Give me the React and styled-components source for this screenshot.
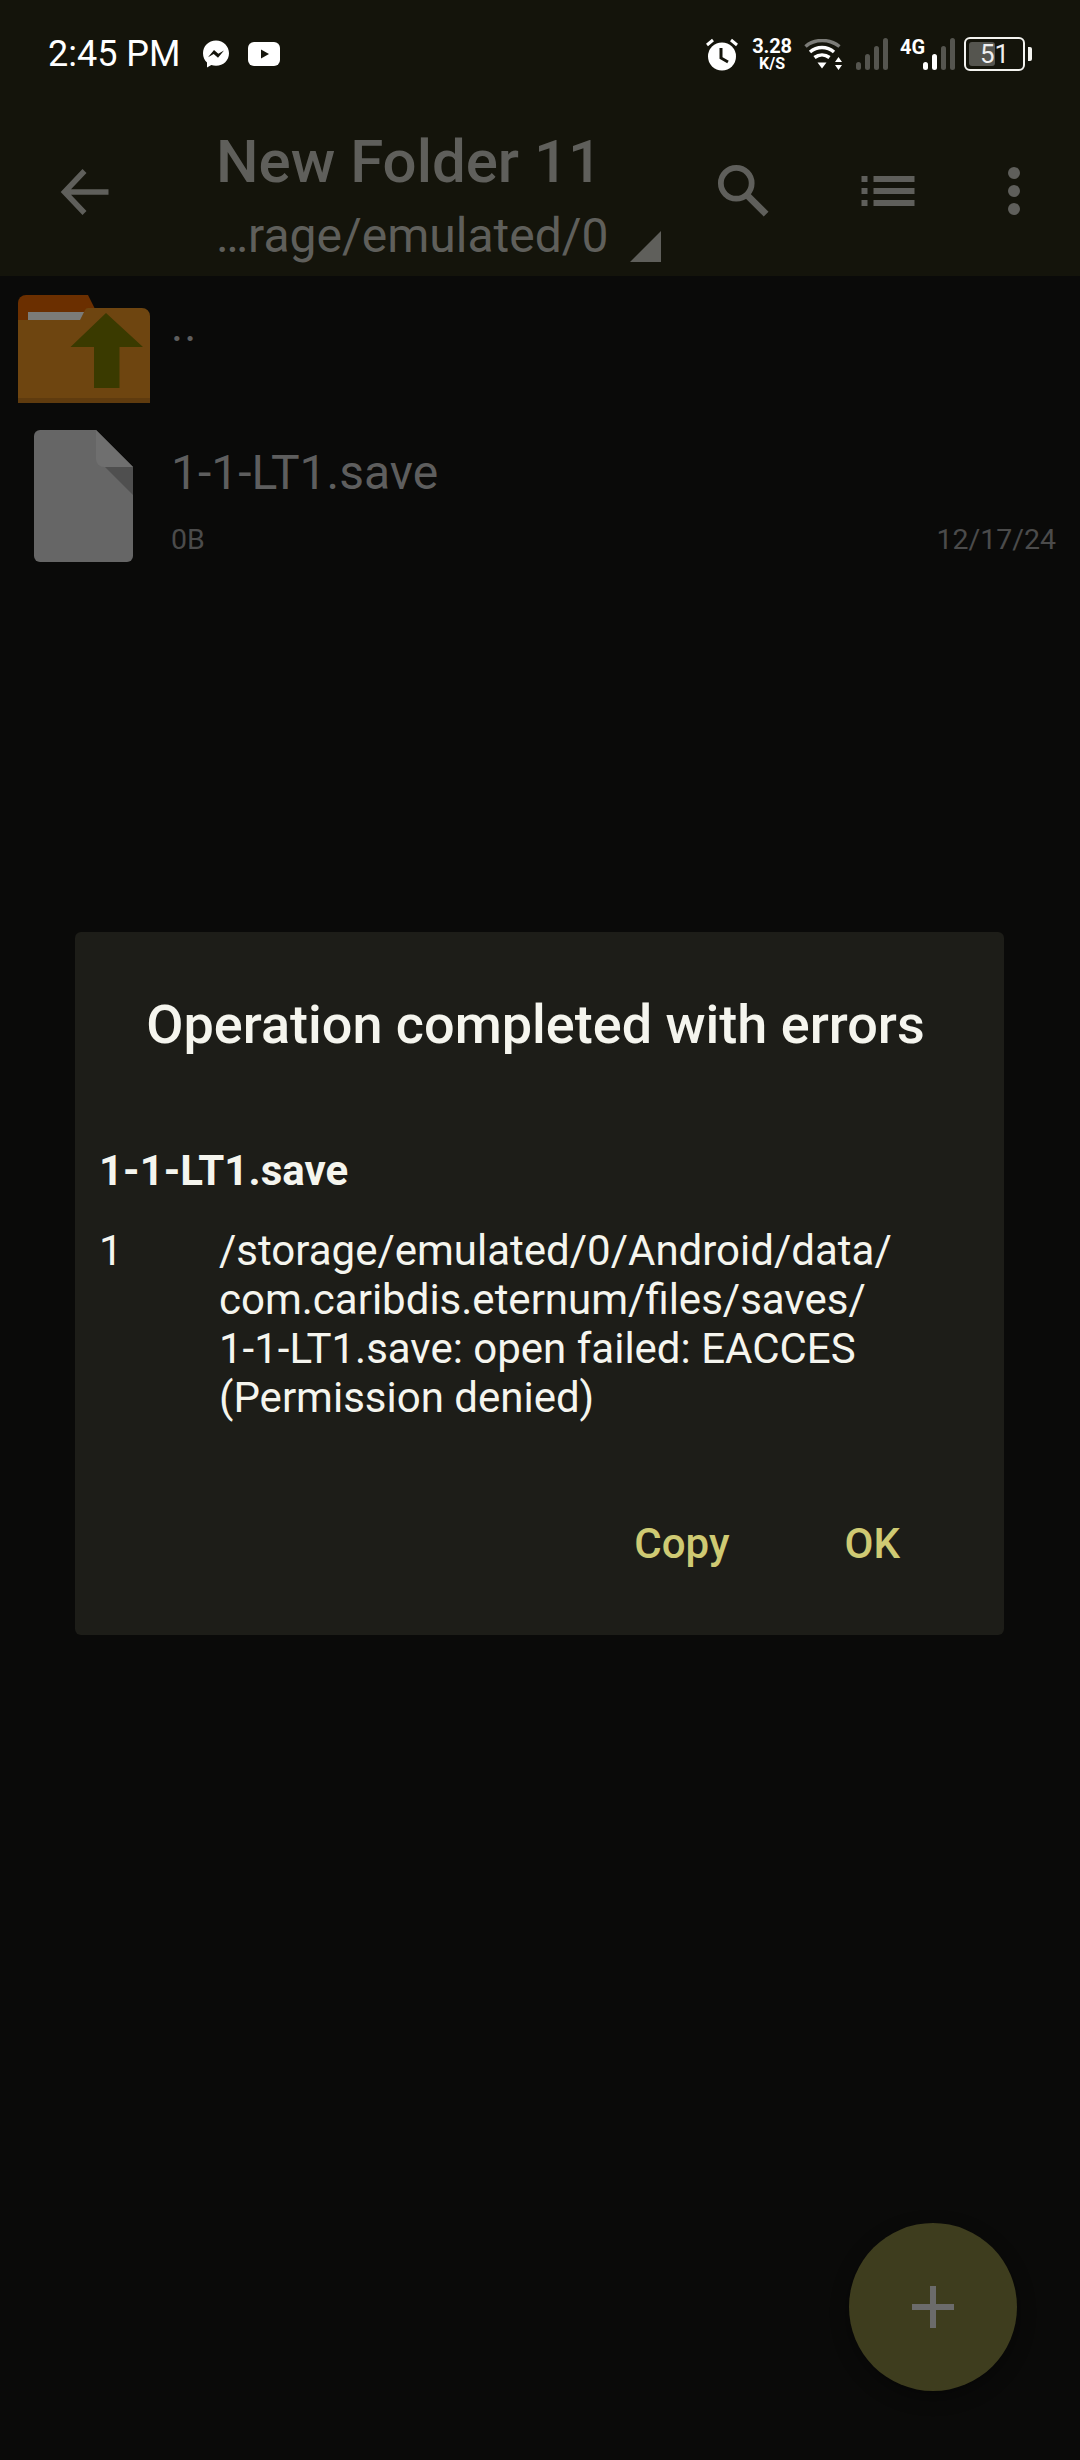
import React from "react";
import styled, { createGlobalStyle } from "styled-components";

const Global = createGlobalStyle`
  html, body { margin: 0; padding: 0; background: #0a0a09; }
  * { box-sizing: border-box; }
`;

const Page = styled.div`
  position: relative;
  width: 1080px;
  height: 2460px;
  overflow: hidden;
  background: #0a0a09;
  font-family: Roboto, "Liberation Sans", sans-serif;
`;
const Header = styled.header`
  height: 276px;
  background: #14140b;
  display: flex;
  flex-direction: column;
`;
const StatusBar = styled.div`
  height: 108px;
  padding: 0 55px 0 48px;
  display: flex;
  align-items: center;
  color: #fff;
`;
const Time = styled.span`
  font-size: 36px;
  line-height: 44px;
  width: 154px;
`;
const StatusRight = styled.div`
  margin-left: auto;
  display: flex;
  align-items: center;
`;
const Speed = styled.div`
  width: 40px;
  margin: -2px 12px 0 14px;
  display: flex;
  flex-direction: column;
  align-items: center;
  font-weight: 700;
  line-height: 1;
`;
const SpeedValue = styled.span`
  font-size: 20px;
  height: 20px;
  letter-spacing: -0.2px;
`;
const SpeedUnit = styled.span`
  font-size: 16px;
  height: 15px;
`;
const NetLabel = styled.span`
  font-size: 20px;
  font-weight: 700;
  line-height: 18px;
  width: 24px;
  margin: -14px -1px 0 12px;
`;
const SignalGap = styled.span`
  width: 13px;
`;
const Battery = styled.div`
  position: relative;
  width: 61px;
  height: 34px;
  margin-left: 9px;
  border: 2.5px solid #f4f4f0;
  border-radius: 6px;
  display: flex;
  align-items: center;
  justify-content: center;
  font-size: 26px;
  color: #eee;
  &::before {
    content: "";
    position: absolute;
    left: 3px;
    top: 3px;
    bottom: 3px;
    width: 26px;
    background: #55554f;
    border-radius: 3px;
  }
  &::after {
    content: "";
    position: absolute;
    right: -9px;
    top: 8px;
    width: 4px;
    height: 14px;
    background: #f4f4f0;
    border-radius: 0 2px 2px 0;
  }
`;
const BatteryText = styled.span`
  position: relative;
  line-height: 1;
`;
const Toolbar = styled.div`
  flex: 1;
  display: flex;
  align-items: flex-start;
  color: #5f5f5b;
`;
const BackSlot = styled.div`
  width: 216px;
  padding: 60px 0 0 60px;
`;
const Titles = styled.div`
  width: 440px;
  padding-top: 25px;
`;
const Title = styled.div`
  font-size: 60px;
  font-weight: 500;
  line-height: 58px;
  white-space: nowrap;
`;
const SubRow = styled.div`
  display: flex;
  align-items: flex-start;
  margin-top: 17px;
`;
const Sub = styled.div`
  font-size: 48px;
  line-height: 56px;
  white-space: nowrap;
`;
const Triangle = styled.svg`
  margin: 23px 0 0 21px;
  flex: none;
`;
const Actions = styled.div`
  display: flex;
  align-items: center;
  height: 68px;
  margin: 49px 0 0 61px;
`;
const SearchGlyph = styled.svg`
  margin-right: 92px;
`;
const ListGlyph = styled.svg`
  margin-right: 93px;
`;
const List = styled.div`
  display: flex;
  flex-direction: column;
`;
const Row = styled.div`
  display: flex;
  height: ${(p) => p.$h}px;
  padding-top: ${(p) => p.$top}px;
`;
const IconSlot = styled.div`
  width: 171px;
  flex: none;
  padding-left: ${(p) => p.$left}px;
`;
const RowText = styled.div`
  flex: 1;
  color: #5e5e5e;
  padding-right: 24px;
`;
const Dots = styled.div`
  font-size: 46px;
  line-height: 46px;
  margin-top: 7px;
  letter-spacing: 1px;
`;
const FileName = styled.div`
  font-size: 48px;
  line-height: 54px;
  margin-top: 16px;
`;
const Meta = styled.div`
  display: flex;
  justify-content: space-between;
  font-size: 28.5px;
  line-height: 34px;
  margin-top: 23px;
  color: #4b4b4b;
`;
const Dialog = styled.section`
  position: absolute;
  left: 75px;
  top: 932px;
  width: 929px;
  height: 703px;
  background: #1d1d18;
  border-radius: 6px;
  padding: 61px 25px 0 24px;
  color: #f5f5ee;
  display: flex;
  flex-direction: column;
`;
const DialogTitle = styled.h2`
  margin: 0;
  padding-right: 7px;
  font-size: 54px;
  font-weight: 500;
  line-height: 64px;
  text-align: center;
`;
const ErrorFile = styled.div`
  font-size: 42px;
  font-weight: 700;
  line-height: 48px;
  margin-top: 90px;
`;
const ErrorRow = styled.div`
  display: grid;
  grid-template-columns: 120px 1fr;
  font-size: 42px;
  line-height: 49px;
  margin-top: 31px;
`;
const Buttons = styled.div`
  display: flex;
  justify-content: flex-end;
  gap: 115px;
  margin-top: 98px;
  padding-right: 79px;
`;
const DialogButton = styled.button`
  all: unset;
  font-family: inherit;
  font-size: 42px;
  font-weight: 500;
  line-height: 48px;
  color: #cfca73;
`;
const Fab = styled.button`
  all: unset;
  position: absolute;
  left: 849px;
  top: 2223px;
  width: 168px;
  height: 168px;
  border-radius: 50%;
  background: #3e3d1e;
  box-shadow: 0 6px 18px rgba(0, 0, 0, 0.35);
  display: flex;
  align-items: center;
  justify-content: center;
`;
const MessengerGlyph = styled.svg`
  margin-right: 18px;
`;
const RowIcon = styled.svg`
  display: block;
`;

const Messenger = () => (
  <MessengerGlyph width="28" height="28" viewBox="0 0 27 28">
    <path fill="#fff" d="M13.5 0.5C6 .5.5 6 .5 13.300c0 3.800 1.500 7 4 9.300v4.900l4.300-2.400c1.500.5 3 .7 4.700.7 7.500 0 13-5.500 13-12.500S21 .5 13.500.5z" />
    <path fill="#14140b" d="M5.500 17.300l6-7.200 4.300 3.600 5.700-3.200-6 7.200-4.300-3.600z" />
  </MessengerGlyph>
);
const YouTube = () => (
  <svg width="32" height="24" viewBox="0 0 32 24">
    <rect width="32" height="24" rx="6" fill="#fff" />
    <path d="M13 7.500l8 4.500-8 4.500z" fill="#14140b" />
  </svg>
);
const Alarm = () => (
  <svg width="32" height="33" viewBox="0 0 32 33">
    <circle cx="16" cy="18.500" r="14" fill="#fff" />
    <path d="M15 10v10l7 4" fill="none" stroke="#14140b" strokeWidth="3" />
    <path d="M1 7l6-5M31 7l-6-5" stroke="#fff" strokeWidth="3" />
  </svg>
);
const Wifi = () => (
  <svg width="39" height="31" viewBox="0 0 38 31">
    <path d="M1 7.500C10-.5 25-.5 35 7.500" fill="none" stroke="#7c7c78" strokeWidth="3.500" />
    <path d="M5.500 13c7-6 17-6 24 0M10 18.500c4.500-3.500 10.500-3.500 15 0" fill="none" stroke="#fff" strokeWidth="3.500" />
    <path d="M13 23.500h9l-4.500 6z" fill="#fff" />
    <path d="M34 18l3.500 5h-7zM34 31l3.500-5h-7z" fill="#fff" />
  </svg>
);
const Signal = ({ lit = 0 }) => (
  <svg width="32" height="32" viewBox="0 0 32 32">
    {[
      [0, 24],
      [9, 16],
      [18, 8],
      [27, 0],
    ].map(([x, y], i) => (
      <rect key={x} x={x} y={y} width="5" height={32 - y} rx="2.500" fill={i < lit ? "#fff" : "#55554f"} />
    ))}
  </svg>
);
const BackArrow = () => (
  <svg width="49" height="48" viewBox="0 0 48 48">
    <path d="M24 3L4 24l20 21M4 24h44" fill="none" stroke="#5f5f5b" strokeWidth="5.500" />
  </svg>
);
const SearchIcon = () => (
  <SearchGlyph width="52" height="52" viewBox="0 0 52 54">
    <circle cx="19" cy="19" r="16" fill="none" stroke="#5f5f5b" strokeWidth="6" />
    <path d="M31 32l19 19" stroke="#5f5f5b" strokeWidth="7" />
  </SearchGlyph>
);
const ListIcon = () => (
  <ListGlyph width="54" height="30" viewBox="0 0 53 30">
    <path fill="#5f5f5b" d="M0 0h6v6H0zM12 0h41v6H12zM0 12h6v6H0zM12 12h41v6H12zM0 24h6v6H0zM12 24h41v6H12z" />
  </ListGlyph>
);
const MoreIcon = () => (
  <svg width="12" height="48" viewBox="0 0 12 48">
    <circle cx="6" cy="6" r="6" fill="#5f5f5b" />
    <circle cx="6" cy="24" r="6" fill="#5f5f5b" />
    <circle cx="6" cy="42" r="6" fill="#5f5f5b" />
  </svg>
);
const FolderUp = () => (
  <RowIcon width="132" height="108" viewBox="0 0 132 108">
    <path fill="#6b2f00" d="M0 8a8 8 0 0 1 8-8h62l8 16v12H0z" />
    <path fill="#7b7b78" d="M10 17h57v8H10z" />
    <path fill="#6e4510" d="M0 25h62l5-10a4 4 0 0 1 3-2h54a8 8 0 0 1 8 8v87H0z" />
    <path fill="#5f3b0e" d="M0 103h132v5H0z" />
    <path fill="#3a3a00" d="M88 18l37 34H101.500v41H76V52H52.500z" />
  </RowIcon>
);
const FileIcon = () => (
  <RowIcon width="99" height="132" viewBox="0 0 99 132">
    <path fill="#666" d="M6 0h56l37 37v89a6 6 0 0 1-6 6H6a6 6 0 0 1-6-6V6a6 6 0 0 1 6-6z" />
    <path fill="#6f6f6f" d="M62 0l37 37H70a8 8 0 0 1-8-8z" />
    <path fill="#4f4f4f" d="M71 37h28v28z" />
  </RowIcon>
);

export default function App() {
  return (
    <Page>
      <Global />
      <Header>
        <StatusBar>
          <Time>2:45 PM</Time>
          <Messenger />
          <YouTube />
          <StatusRight>
            <Alarm />
            <Speed>
              <SpeedValue>3.28</SpeedValue>
              <SpeedUnit>K/S</SpeedUnit>
            </Speed>
            <Wifi />
            <SignalGap />
            <Signal />
            <NetLabel>4G</NetLabel>
            <Signal lit={2} />
            <Battery>
              <BatteryText>51</BatteryText>
            </Battery>
          </StatusRight>
        </StatusBar>
        <Toolbar>
          <BackSlot>
            <BackArrow />
          </BackSlot>
          <Titles>
            <Title>New Folder 11</Title>
            <SubRow>
              <Sub>…rage/emulated/0</Sub>
              <Triangle width="31" height="31" viewBox="0 0 31 31">
                <path d="M31 0v31H0z" fill="#5f5f5b" />
              </Triangle>
            </SubRow>
          </Titles>
          <Actions>
            <SearchIcon />
            <ListIcon />
            <MoreIcon />
          </Actions>
        </Toolbar>
      </Header>
      <List>
        <Row $h={130} $top={19}>
          <IconSlot $left={18}>
            <FolderUp />
          </IconSlot>
          <RowText>
            <Dots>..</Dots>
          </RowText>
        </Row>
        <Row $h={180} $top={24}>
          <IconSlot $left={34}>
            <FileIcon />
          </IconSlot>
          <RowText>
            <FileName>1-1-LT1.save</FileName>
            <Meta>
              <span>0B</span>
              <span>12/17/24</span>
            </Meta>
          </RowText>
        </Row>
      </List>
      <Dialog>
        <DialogTitle>Operation completed with errors</DialogTitle>
        <ErrorFile>1-1-LT1.save</ErrorFile>
        <ErrorRow>
          <span>1</span>
          <span>
            /storage/emulated/0/Android/data/
            <br />
            com.caribdis.eternum/files/saves/
            <br />
            1-1-LT1.save: open failed: EACCES
            <br />
            (Permission denied)
          </span>
        </ErrorRow>
        <Buttons>
          <DialogButton>Copy</DialogButton>
          <DialogButton>OK</DialogButton>
        </Buttons>
      </Dialog>
      <Fab aria-label="Add">
        <svg width="42" height="42" viewBox="0 0 42 42">
          <path d="M18 0h6v18h18v6H24v18h-6V24H0v-6h18z" fill="#6b6b6b" />
        </svg>
      </Fab>
    </Page>
  );
}
